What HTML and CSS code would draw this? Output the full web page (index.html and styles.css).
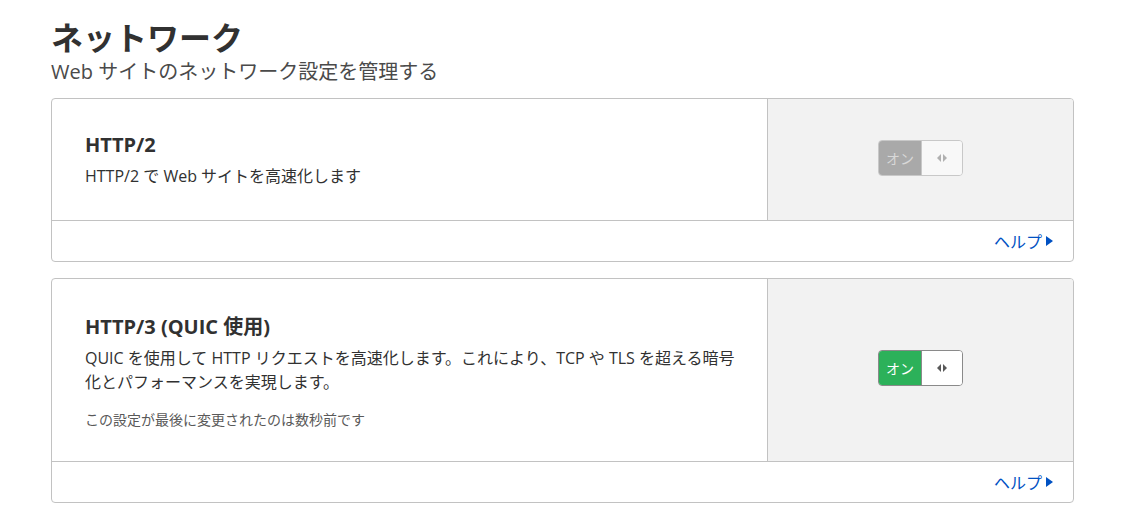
FILE: index.html
```html
<!DOCTYPE html>
<html lang="ja">
<head>
<meta charset="utf-8">
<link rel="stylesheet" href="styles.css">
</head>
<body>
<div class="page">
  <header class="page-head">
    <h1 class="page-title">ネットワーク</h1>
    <p class="page-sub">Web サイトのネットワーク設定を管理する</p>
  </header>

  <section class="card">
    <div class="card-main">
      <div class="card-text card-text-short">
        <h2 class="card-title">HTTP/2</h2>
        <p class="card-desc">HTTP/2 で Web サイトを高速化します</p>
      </div>
      <div class="card-control">
        <div class="toggle toggle-disabled">
          <span class="toggle-on">オン</span>
          <span class="toggle-knob"><svg width="10" height="8" viewBox="0 0 10 8"><path d="M4 0L0 4L4 8Z M6 0L10 4L6 8Z" fill="currentColor"/></svg></span>
        </div>
      </div>
    </div>
    <div class="card-foot"><a class="help" href="#">ヘルプ<svg width="7" height="10" viewBox="0 0 7 10"><path d="M0 0L7 5L0 10Z" fill="currentColor"/></svg></a></div>
  </section>

  <section class="card">
    <div class="card-main">
      <div class="card-text">
        <h2 class="card-title">HTTP/3 (QUIC 使用)</h2>
        <p class="card-desc">QUIC を使用して HTTP リクエストを高速化します。これにより、TCP や TLS を超える暗号化とパフォーマンスを実現します。</p>
        <p class="card-note">この設定が最後に変更されたのは数秒前です</p>
      </div>
      <div class="card-control">
        <div class="toggle toggle-active">
          <span class="toggle-on">オン</span>
          <span class="toggle-knob"><svg width="10" height="8" viewBox="0 0 10 8"><path d="M4 0L0 4L4 8Z M6 0L10 4L6 8Z" fill="currentColor"/></svg></span>
        </div>
      </div>
    </div>
    <div class="card-foot"><a class="help" href="#">ヘルプ<svg width="7" height="10" viewBox="0 0 7 10"><path d="M0 0L7 5L0 10Z" fill="currentColor"/></svg></a></div>
  </section>
</div>
</body>
</html>
```

FILE: styles.css
```css
* { box-sizing: border-box; }
html, body { margin: 0; padding: 0; background: #fff; }
body {
  font-family: "Open Sans", "Noto Sans CJK JP", sans-serif;
  color: #313131;
}
.page {
  padding: 17px 48px 0 51px;
}
.page-head { margin-bottom: 13px; }
.page-title {
  margin: 0;
  font-size: 32px;
  font-weight: 700;
  line-height: 42px;
  color: #313131;
}
.page-sub {
  margin: 0;
  font-size: 20px;
  line-height: 26px;
  color: #4a4a4a;
}
.card {
  border: 1px solid #c2c2c2;
  border-radius: 4px;
  margin-bottom: 16px;
  overflow: hidden;
}
.card-main {
  display: flex;
  border-bottom: 1px solid #c2c2c2;
}
.card-text {
  width: 716px;
  padding: 33px 18px 30px 33px;
  border-right: 1px solid #c2c2c2;
}
.card-text-short {
  padding-top: 31px;
  padding-bottom: 32px;
}
.card-title {
  margin: 0 0 4px;
  font-size: 20px;
  line-height: 30px;
  font-weight: 700;
  color: #313131;
}
.card-desc {
  margin: 0;
  font-size: 16px;
  line-height: 24px;
  color: #313131;
}
.card-note {
  margin: 15px 0 0;
  font-size: 14px;
  line-height: 22px;
  color: #595959;
}
.card-control {
  flex: 1;
  background: #f2f2f2;
  display: flex;
  align-items: center;
  justify-content: center;
}
.toggle {
  display: flex;
  width: 85px;
  height: 36px;
  margin-bottom: 4px;
  border-radius: 4px;
  overflow: hidden;
  border: 1px solid #a0a0a0;
}
.toggle-on {
  width: 42px;
  display: flex;
  align-items: center;
  justify-content: center;
  font-size: 14px;
  color: #fff;
}
.toggle-knob {
  flex: 1;
  display: flex;
  align-items: center;
  justify-content: center;
  background: #fff;
  border-left: 1px solid #a0a0a0;
  color: #595959;
}
.toggle-disabled { border-color: #c8c8c8; }
.toggle-disabled .toggle-on { background: #a9a9a9; color: #d8d8d8; }
.toggle-disabled .toggle-knob { background: #f8f8f8; border-left-color: #c8c8c8; color: #b0b0b0; }
.toggle-active { border-color: #8a8a8a; }
.toggle-active .toggle-on { background: #2cb15a; }
.toggle-active .toggle-knob { border-left-color: #8a8a8a; }
.card-foot {
  height: 40px;
  display: flex;
  align-items: center;
  justify-content: flex-end;
  padding-right: 20px;
}
.help {
  display: flex;
  align-items: center;
  gap: 4px;
  font-size: 16px;
  color: #0051c3;
  text-decoration: none;
}
```
